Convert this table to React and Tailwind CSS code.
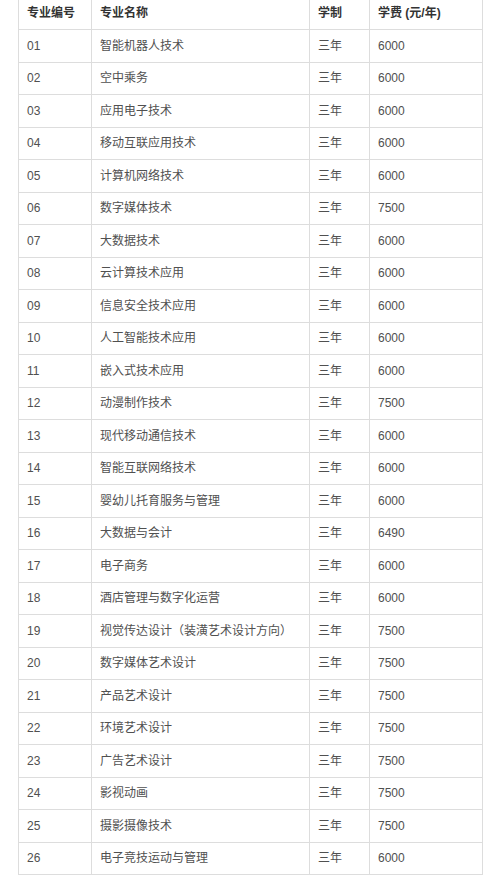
import React from "react";

const rows = [
  ["01", "智能机器人技术", "三年", "6000"],
  ["02", "空中乘务", "三年", "6000"],
  ["03", "应用电子技术", "三年", "6000"],
  ["04", "移动互联应用技术", "三年", "6000"],
  ["05", "计算机网络技术", "三年", "6000"],
  ["06", "数字媒体技术", "三年", "7500"],
  ["07", "大数据技术", "三年", "6000"],
  ["08", "云计算技术应用", "三年", "6000"],
  ["09", "信息安全技术应用", "三年", "6000"],
  ["10", "人工智能技术应用", "三年", "6000"],
  ["11", "嵌入式技术应用", "三年", "6000"],
  ["12", "动漫制作技术", "三年", "7500"],
  ["13", "现代移动通信技术", "三年", "6000"],
  ["14", "智能互联网络技术", "三年", "6000"],
  ["15", "婴幼儿托育服务与管理", "三年", "6000"],
  ["16", "大数据与会计", "三年", "6490"],
  ["17", "电子商务", "三年", "6000"],
  ["18", "酒店管理与数字化运营", "三年", "6000"],
  ["19", "视觉传达设计（装潢艺术设计方向）", "三年", "7500"],
  ["20", "数字媒体艺术设计", "三年", "7500"],
  ["21", "产品艺术设计", "三年", "7500"],
  ["22", "环境艺术设计", "三年", "7500"],
  ["23", "广告艺术设计", "三年", "7500"],
  ["24", "影视动画", "三年", "7500"],
  ["25", "摄影摄像技术", "三年", "7500"],
  ["26", "电子竞技运动与管理", "三年", "6000"],
];

export default function App() {
  return (
    <div
      className="w-[490px] h-[885px] bg-white overflow-hidden"
      style={{ fontFamily: '"Liberation Sans", "Noto Sans CJK SC", sans-serif' }}
    >
      <table className="ml-[18px] -mt-[4px] w-[464px] table-fixed border-collapse text-[12px] leading-none">
        <colgroup>
          <col className="w-[73px]" />
          <col className="w-[218px]" />
          <col className="w-[60px]" />
          <col className="w-[113px]" />
        </colgroup>
        <thead>
          <tr>
            {["专业编号", "专业名称", "学制", "学费 (元/年)"].map((h) => (
              <th
                key={h}
                className="h-[33px] border border-[#dddddd] px-[8px] text-left align-middle font-bold text-[#333333]"
              >
                {h}
              </th>
            ))}
          </tr>
        </thead>
        <tbody>
          {rows.map((r) => (
            <tr key={r[0]}>
              {r.map((c, i) => (
                <td
                  key={i}
                  className="h-[32.5px] border border-[#dddddd] px-[8px] text-left align-middle text-[#505050] whitespace-nowrap"
                >
                  {c}
                </td>
              ))}
            </tr>
          ))}
        </tbody>
      </table>
    </div>
  );
}
